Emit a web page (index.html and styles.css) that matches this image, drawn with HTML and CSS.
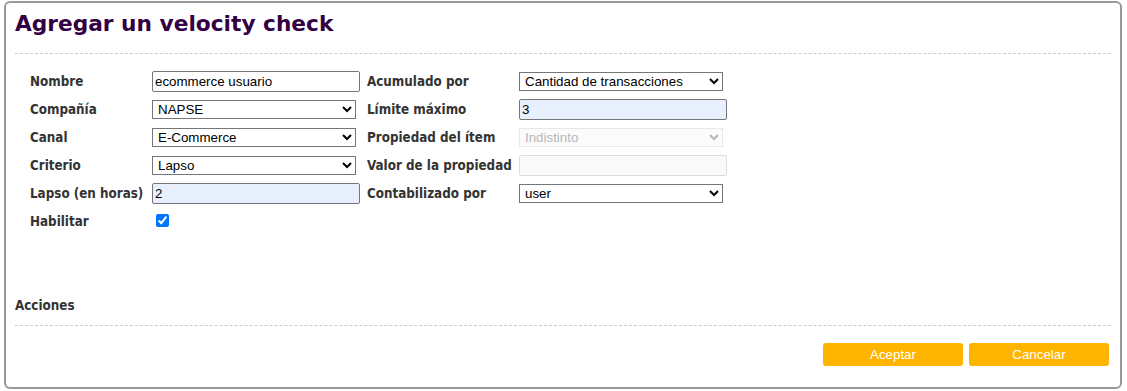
FILE: index.html
```html
<!DOCTYPE html>
<html lang="es">
<head>
    <meta charset="UTF-8">
    <title>Agregar un velocity check</title>
    <link rel="stylesheet" href="styles.css">
</head>
<body>
    <div class="panel">
        <h1 class="title">Agregar un velocity check</h1>
        <div class="form">
            <label>Nombre</label>
            <input type="text" value="ecommerce usuario">
            <label>Acumulado por</label>
            <select><option>Cantidad de transacciones</option></select>

            <label>Compañía</label>
            <select><option>NAPSE</option></select>
            <label>Límite máximo</label>
            <input type="text" class="filled" value="3">

            <label>Canal</label>
            <select><option>E-Commerce</option></select>
            <label>Propiedad del ítem</label>
            <select disabled><option>Indistinto</option></select>

            <label>Criterio</label>
            <select><option>Lapso</option></select>
            <label>Valor de la propiedad</label>
            <input type="text" disabled>

            <label>Lapso (en horas)</label>
            <input type="text" class="filled" value="2">
            <label>Contabilizado por</label>
            <select><option>user</option></select>

            <label>Habilitar</label>
            <div><input type="checkbox" checked></div>
        </div>
        <h2 class="section">Acciones</h2>
        <div class="actions">
            <button>Aceptar</button>
            <button>Cancelar</button>
        </div>
    </div>
</body>
</html>
```

FILE: styles.css
```css
body {
    margin: 0;
    font-family: "DejaVu Sans", Verdana, sans-serif;
    background: #fff;
}
.panel {
    margin: 1px 5px 2px 4px;
    height: 384px;
    border: 2px solid #999;
    border-radius: 6px;
    padding: 0 9px;
    box-sizing: content-box;
}
.title {
    margin: 0;
    padding: 8px 0 17px 0;
    font-size: 21.7px;
    font-weight: bold;
    color: #330044;
    border-bottom: 1px dashed #ccc;
}
.form {
    display: grid;
    grid-template-columns: 122px 215px 152px 1fr;
    grid-auto-rows: 28px;
    align-items: center;
    padding: 13px 0 0 15px;
    height: 219px;
}
.form label {
    font-family: "DejaVu Sans Condensed", "DejaVu Sans", Tahoma, sans-serif;
    font-size: 13.3px;
    font-weight: bold;
    color: #333;
    white-space: nowrap;
}
.form input[type="text"] {
    width: 208px;
    height: 21px;
    box-sizing: border-box;
    border: 1px solid #767676;
    border-radius: 2px;
    padding: 0 2px;
    font-family: "Liberation Sans", Arial, sans-serif;
    font-size: 13.33px;
    color: #000;
    background: #fff;
}
.form input.filled {
    background: #e8f0fe;
}
.form input[type="text"]:disabled {
    background: #fafafa;
    border-color: #ddd;
}
.form select {
    width: 204px;
    height: 19px;
    box-sizing: border-box;
    font-family: "Liberation Sans", Arial, sans-serif;
    font-size: 13.33px;
    color: #000;
    border: 1px solid #767676;
    border-radius: 0;
    background: #fff;
    padding: 0 1px;
}
.form select:disabled {
    color: #999;
    border-color: #ddd;
    background: #fafafa;
}
.form input[type="checkbox"] {
    margin: 0 0 0 4px;
    width: 13px;
    height: 13px;
}
.section {
    margin: 0;
    padding: 12px 0 12px 0;
    font-family: "DejaVu Sans Condensed", "DejaVu Sans", Tahoma, sans-serif;
    font-size: 13.3px;
    font-weight: bold;
    color: #333;
    border-bottom: 1px dashed #ccc;
}
.actions {
    display: flex;
    justify-content: flex-end;
    gap: 6px;
    padding: 17px 2px 0 0;
}
.actions button {
    width: 140px;
    height: 23px;
    border: none;
    border-radius: 3px;
    background: #ffb400;
    color: #fff;
    font-family: "Liberation Sans", Arial, sans-serif;
    font-size: 13.33px;
    cursor: pointer;
}
```
